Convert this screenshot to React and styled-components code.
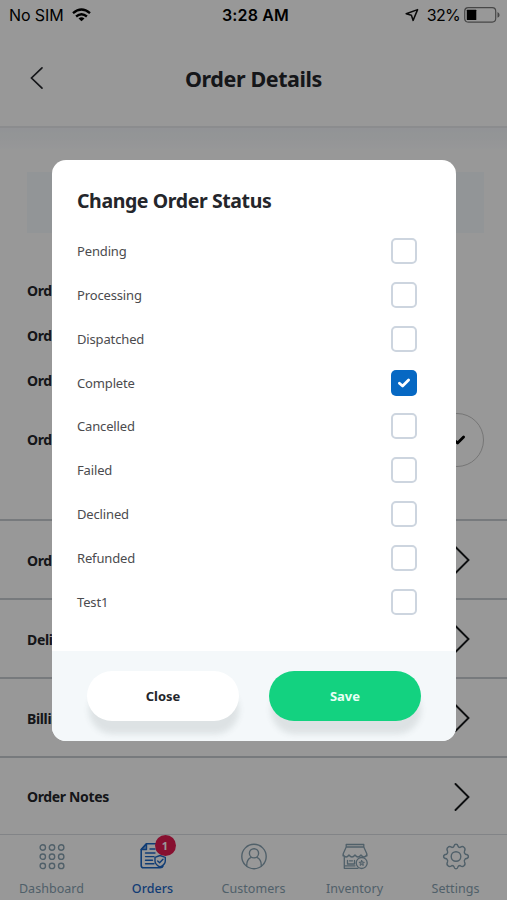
import React, { useState } from "react";
import styled, { createGlobalStyle } from "styled-components";

const GlobalStyle = createGlobalStyle`
  * {
    box-sizing: border-box;
  }
  body {
    margin: 0;
    font-family: "Noto Sans", sans-serif;
    color: #24262b;
  }
  button {
    border: 0;
    padding: 0;
    background: none;
    font-family: inherit;
    color: inherit;
    cursor: pointer;
  }
`;

const Screen = styled.div`
  position: relative;
  display: flex;
  flex-direction: column;
  width: 507px;
  height: 900px;
  overflow: hidden;
  background: #fefefe;
`;

const StatusBar = styled.div`
  display: grid;
  grid-template-columns: 1fr auto 1fr;
  align-items: center;
  height: 30px;
  padding: 0 7px 0 9px;
  font-family: "Inter", sans-serif;
  font-size: 16px;
  color: #000;
`;

const StatusSide = styled.div`
  display: flex;
  align-items: center;
  justify-content: ${(props) => (props.$right ? "flex-end" : "flex-start")};
  gap: ${(props) => (props.$right ? "4px" : "8px")};
  letter-spacing: ${(props) => (props.$right ? "-0.7px" : "-0.1px")};

  svg:first-child {
    margin-right: 4px;
  }
`;

const Clock = styled.div`
  font-weight: 600;
  letter-spacing: 0.15px;
  padding-left: 2px;
`;

const Header = styled.div`
  display: grid;
  grid-template-columns: 60px 1fr 60px;
  align-items: center;
  height: 98px;
  border-bottom: 2px solid #e8eaed;
  text-align: center;
`;

const BackButton = styled.button`
  display: flex;
  justify-content: flex-end;
  padding-right: 16px;
  height: 24px;
`;

const Title = styled.h1`
  margin: 0;
  padding-top: 2px;
  font-size: 21.5px;
  font-weight: 700;
  letter-spacing: -0.4px;
`;

const Content = styled.div`
  height: 391px;
  padding: 44px 23px 0 27px;
  background: linear-gradient(#f3f6fa, #f8fafc 14px, #fefefe 24px);
`;

const Banner = styled.div`
  height: 61px;
  margin-bottom: 35px;
  background: #f4f8fc;
`;

const Field = styled.div`
  display: flex;
  align-items: center;
  justify-content: space-between;
  height: ${(props) => (props.$tall ? "74px" : "45px")};
  font-size: 14px;
  font-weight: 700;
  letter-spacing: -0.35px;
`;

const Round = styled.div`
  display: flex;
  align-items: center;
  justify-content: center;
  width: 54px;
  height: 54px;
  padding-left: 3px;
  border: 1px solid #c4c4c4;
  border-radius: 50%;
`;

const Rows = styled.div`
  padding-top: 1px;
`;

const LinkRow = styled.div`
  display: flex;
  align-items: center;
  justify-content: space-between;
  height: ${(props) => (props.$last ? "78px" : "79px")};
  padding: 1px 37px 0 27px;
  border-top: 2px solid #c6cbd0;
  font-size: 14px;
  font-weight: 700;
  letter-spacing: -0.35px;
`;

const TabBar = styled.div`
  display: grid;
  grid-template-columns: repeat(5, 101px);
  height: 66px;
  padding-left: 1px;
  border-top: 1px solid #d9dde2;
`;

const Tab = styled.button`
  display: flex;
  flex-direction: column;
  align-items: center;
  padding-top: 8px;
  font-size: 12.5px;
  line-height: 18px;
  letter-spacing: 0.05px;
  font-weight: ${(props) => (props.$active ? 500 : 400)};
  color: ${(props) => (props.$active ? "#1c66c4" : "#86a0b0")};
`;

const TabIcon = styled.span`
  position: relative;
  display: block;
  height: 27px;
  margin-bottom: 10px;
`;

const Badge = styled.span`
  position: absolute;
  top: -8px;
  left: 16px;
  width: 21px;
  height: 21px;
  border-radius: 50%;
  background: #e21b50;
  color: #fff;
  font-size: 11px;
  line-height: 21px;
  font-weight: 700;
  text-align: center;
`;

const Overlay = styled.div`
  position: absolute;
  inset: 0;
  padding: 160px 0 0 52px;
  background: rgba(0, 0, 0, 0.4);
`;

const Modal = styled.div`
  display: flex;
  flex-direction: column;
  width: 404px;
  height: 581px;
  border-radius: 14px;
  overflow: hidden;
  background: #fff;
`;

const ModalBody = styled.div`
  height: 491px;
  padding: 25px 39px 0 25px;
`;

const ModalTitle = styled.h2`
  margin: 0 0 21px;
  font-size: 19.5px;
  line-height: 32px;
  font-weight: 700;
  letter-spacing: -0.4px;
`;

const Option = styled.label`
  display: flex;
  align-items: center;
  justify-content: space-between;
  height: 26px;
  margin-bottom: 17.85px;
  font-size: 13px;
  letter-spacing: -0.15px;
  color: #4b4b4e;
  cursor: pointer;
`;

const Checkbox = styled.button`
  display: flex;
  align-items: center;
  justify-content: center;
  width: 26px;
  height: 26px;
  border: ${(props) => (props.$checked ? "0" : "2px solid #cdd5df")};
  border-radius: 5px;
  background: ${(props) => (props.$checked ? "#0668c3" : "#fff")};
`;

const ModalFooter = styled.div`
  display: flex;
  gap: 30px;
  flex: 1;
  padding: 20px 35px 0;
  background: #f4f8fa;
`;

const PillButton = styled.button`
  width: 152px;
  height: 50px;
  border-radius: 25px;
  font-size: 13px;
  font-weight: 700;
  background: ${(props) => (props.$primary ? "#13d280" : "#fff")};
  color: ${(props) => (props.$primary ? "#e8fff5" : "#24262b")};
  box-shadow: 1px 14px 6px -1px rgba(60, 70, 70, 0.12);
`;

const statuses = [
  "Pending",
  "Processing",
  "Dispatched",
  "Complete",
  "Cancelled",
  "Failed",
  "Declined",
  "Refunded",
  "Test1",
];

const rows = ["Order", "Delivery", "Billing", "Order Notes"];

const WifiIcon = () => (
  <svg width="19" height="14" viewBox="0 0 19 14" fill="none" stroke="#000" strokeWidth="2.4">
    <path d="M1 5.1 Q9.5 -2.3 18 5.1" />
    <path d="M4.1 8.5 Q9.5 3.9 14.9 8.5" />
    <path d="M9.5 13.3 L6.5 10.4 Q9.5 8 12.5 10.4 Z" fill="#000" stroke="none" />
  </svg>
);

const LocationIcon = () => (
  <svg width="14" height="14" viewBox="0 0 14 14" fill="none" stroke="#111" strokeWidth="1.5" strokeLinejoin="round">
    <path d="M12.6 1.6 L1.2 5.8 L6.4 7.2 L8.1 12.4 Z" />
  </svg>
);

const BatteryIcon = () => (
  <svg width="36" height="16" viewBox="0 0 36 16">
    <rect x="0.7" y="0.7" width="31" height="14.4" rx="3.5" fill="none" stroke="#777" strokeWidth="1.2" />
    <rect x="2.8" y="2.8" width="9.5" height="10.2" rx="0.5" fill="#000" />
    <path d="M33.5 5 Q35.6 6 35.6 7.9 Q35.6 9.8 33.5 10.8 Z" fill="#777" />
  </svg>
);

const Chevron = () => (
  <svg width="16" height="28" viewBox="0 0 16 28" fill="none" stroke="#17191c" strokeWidth="1.9" strokeLinecap="round">
    <path d="M1.5 1 L14.5 14 L1.5 27" />
  </svg>
);

const CheckIcon = ({ color }) => (
  <svg width="14" height="10" viewBox="0 0 14 10" fill="none" stroke={color} strokeWidth="2.8" strokeLinecap="round" strokeLinejoin="round">
    <path d="M2.4 5.2 L5.6 8 L11.6 2" />
  </svg>
);

const tabSvg = {
  width: 28,
  height: 27,
  viewBox: "0 0 28 27",
  fill: "none",
  stroke: "currentColor",
  strokeWidth: 1.4,
  strokeLinejoin: "round",
  strokeLinecap: "round",
};

const DashboardIcon = () => (
  <svg {...tabSvg}>
    {[4.5, 13.7, 22.9].map((y) =>
      [4.8, 14, 23.2].map((x) => <circle key={`${x}-${y}`} cx={x} cy={y} r="2.7" />)
    )}
  </svg>
);

const OrdersIcon = () => (
  <svg {...tabSvg}>
    <path d="M18.5 8 V0.8 H7.5 L2.2 6.5 V22.5 Q2.2 24.8 4.5 24.8 H21 Q23.5 24.8 24 23" strokeWidth="1.6" />
    <path d="M7.5 0.8 V6.5 H2.2 Z" fill="currentColor" fillOpacity="0.5" />
    <path d="M11 6 H16 M6.5 10 H16 M6.5 13.6 H15 M6.5 17.2 H13.5 M6.5 20.8 H15" />
    <path d="M21 12.5 L26.3 14.3 V18 Q26.3 21.5 21 24 Q16 21.5 16 18 V14.3 Z" />
    <path d="M18.7 18 L20.6 19.8 L24 16.2" />
  </svg>
);

const CustomersIcon = () => (
  <svg {...tabSvg}>
    <circle cx="14" cy="13.5" r="12.2" />
    <circle cx="14" cy="10.3" r="4.6" />
    <path d="M6.7 23 Q6.5 16.3 11.2 14.4 M21.3 23 Q21.5 16.3 16.8 14.4" />
  </svg>
);

const InventoryIcon = () => (
  <svg {...tabSvg} strokeWidth="1.3">
    <path d="M5.2 1.5 H22.8 V4 H5.2 Z M5.2 4 L2.2 10.8 V13 M22.8 4 L25.8 10.8 V13" />
    <path d="M2.2 12 Q5.1 16 8 12 Q11 16 14 12 Q17 16 20 12 Q22.9 16 25.8 12" />
    <path d="M3.3 14.5 V25.3 H17 M6.5 17.5 V21 H13.5 V17.5 M8.5 17.8 H11.5 M3.3 22.8 H14" />
    <circle cx="20.7" cy="20" r="5.5" />
    <path d="M20.7 17.4 L21.5 19.1 L23.3 19.3 L22 20.6 L22.3 22.4 L20.7 21.5 L19.1 22.4 L19.4 20.6 L18.1 19.3 L19.9 19.1 Z" strokeWidth="1" fill="currentColor" fillOpacity="0.5" />
  </svg>
);

const SettingsIcon = () => (
  <svg {...tabSvg}>
    <circle cx="14" cy="13.5" r="4.8" />
    <path d="M14 1.2 Q15.6 1.2 15.9 3 Q16.3 4.5 18 4.5 Q20.4 2.6 22 4.2 Q23.8 5.8 22.5 8 Q21.8 9.6 23.4 11.2 Q26.4 11.6 26.4 13.5 Q26.4 15.4 23.4 15.8 Q21.8 17.4 22.5 19 Q23.8 21.2 22 22.8 Q20.4 24.4 18 22.5 Q16.3 22.5 15.9 24 Q15.6 25.8 14 25.8 Q12.4 25.8 12.1 24 Q11.7 22.5 10 22.5 Q7.6 24.4 6 22.8 Q4.2 21.2 5.5 19 Q6.2 17.4 4.6 15.8 Q1.6 15.4 1.6 13.5 Q1.6 11.6 4.6 11.2 Q6.2 9.6 5.5 8 Q4.2 5.8 6 4.2 Q7.6 2.6 10 4.5 Q11.7 4.5 12.1 3 Q12.4 1.2 14 1.2 Z" />
  </svg>
);

const tabs = [
  { name: "Dashboard", Icon: DashboardIcon },
  { name: "Orders", Icon: OrdersIcon, badge: 1 },
  { name: "Customers", Icon: CustomersIcon },
  { name: "Inventory", Icon: InventoryIcon },
  { name: "Settings", Icon: SettingsIcon },
];

function App() {
  const [status, setStatus] = useState("Complete");

  return (
    <Screen>
      <GlobalStyle />
      <StatusBar>
        <StatusSide>
          <span>No SIM</span>
          <WifiIcon />
        </StatusSide>
        <Clock>3:28 AM</Clock>
        <StatusSide $right>
          <LocationIcon />
          <span>32%</span>
          <BatteryIcon />
        </StatusSide>
      </StatusBar>

      <Header>
        <BackButton>
          <svg width="14" height="24" viewBox="0 0 14 24" fill="none" stroke="#24262b" strokeWidth="1.7" strokeLinecap="round">
            <path d="M12 1.8 L1.5 12 L12 22.2" />
          </svg>
        </BackButton>
        <Title>Order Details</Title>
      </Header>

      <Content>
        <Banner />
        <Field>Order</Field>
        <Field>Order</Field>
        <Field>Order</Field>
        <Field $tall>
          Order
          <Round>
            <CheckIcon color="#000" />
          </Round>
        </Field>
      </Content>

      <Rows>
        {rows.map((row, i) => (
          <LinkRow key={row + i} $last={i === rows.length - 1}>
            {row}
            <Chevron />
          </LinkRow>
        ))}
      </Rows>

      <TabBar>
        {tabs.map(({ name, Icon, badge }) => (
          <Tab key={name} $active={name === "Orders"}>
            <TabIcon>
              <Icon />
              {badge && <Badge>{badge}</Badge>}
            </TabIcon>
            {name}
          </Tab>
        ))}
      </TabBar>

      <Overlay>
        <Modal>
          <ModalBody>
            <ModalTitle>Change Order Status</ModalTitle>
            {statuses.map((name) => (
              <Option key={name}>
                {name}
                <Checkbox $checked={status === name} onClick={() => setStatus(name)}>
                  {status === name && <CheckIcon color="#fff" />}
                </Checkbox>
              </Option>
            ))}
          </ModalBody>
          <ModalFooter>
            <PillButton>Close</PillButton>
            <PillButton $primary>Save</PillButton>
          </ModalFooter>
        </Modal>
      </Overlay>
    </Screen>
  );
}

export default App;
